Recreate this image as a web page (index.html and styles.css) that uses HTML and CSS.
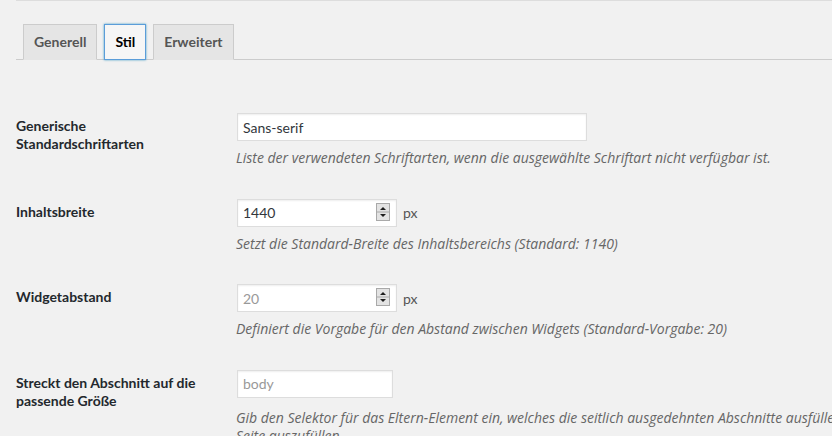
FILE: index.html
```html
<html><head><title>Elementor Einstellungen</title>
<link rel="stylesheet" href="styles.css">
</head>
<body>
  <div class="wrap">
    <nav class="nav-tab-wrapper">
      <a class="nav-tab">Generell</a>
      <a class="nav-tab nav-tab-active">Stil</a>
      <a class="nav-tab">Erweitert</a>
    </nav>

    <table class="form-table">
      <tr>
        <th>Generische Standardschriftarten</th>
        <td>
          <div class="field">
            <input class="regular-text" type="text" value="Sans-serif">
          </div>
          <p class="description">Liste der verwendeten Schriftarten, wenn die ausgewählte Schriftart nicht verfügbar ist.</p>
        </td>
      </tr>
      <tr>
        <th>Inhaltsbreite</th>
        <td>
          <div class="field">
            <span class="number-wrap">
              <input class="number-text" type="text" value="1440">
              <svg class="spinner" width="14" height="18" viewBox="0 0 14 18">
                <rect x="0.5" y="0.5" width="13" height="17" fill="#e3e3e3" stroke="#a9a9a9"/>
                <line x1="1" y1="9" x2="13" y2="9" stroke="#a9a9a9"/>
                <path d="M4 7 L7 4 L10 7 Z" fill="#1e1e1e"/>
                <path d="M4 11 L10 11 L7 14 Z" fill="#1e1e1e"/>
              </svg>
            </span>
            <span class="unit">px</span>
          </div>
          <p class="description">Setzt die Standard-Breite des Inhaltsbereichs (Standard: 1140)</p>
        </td>
      </tr>
      <tr>
        <th>Widgetabstand</th>
        <td>
          <div class="field">
            <span class="number-wrap">
              <input class="number-text" type="text" placeholder="20">
              <svg class="spinner" width="14" height="18" viewBox="0 0 14 18">
                <rect x="0.5" y="0.5" width="13" height="17" fill="#e3e3e3" stroke="#a9a9a9"/>
                <line x1="1" y1="9" x2="13" y2="9" stroke="#a9a9a9"/>
                <path d="M4 7 L7 4 L10 7 Z" fill="#1e1e1e"/>
                <path d="M4 11 L10 11 L7 14 Z" fill="#1e1e1e"/>
              </svg>
            </span>
            <span class="unit">px</span>
          </div>
          <p class="description">Definiert die Vorgabe für den Abstand zwischen Widgets (Standard-Vorgabe: 20)</p>
        </td>
      </tr>
      <tr>
        <th>Streckt den Abschnitt auf die passende Größe</th>
        <td>
          <div class="field">
            <input class="selector-text" type="text" placeholder="body">
          </div>
          <p class="description long">Gib den Selektor für das Eltern-Element ein, welches die seitlich ausgedehnten Abschnitte ausfüllen sollen (z.B. #primary / .wrapper / main etc). Leer lassen, um die<br>Seite auszufüllen.</p>
        </td>
      </tr>
    </table>
  </div>
</body>
</html>
```

FILE: styles.css
```css
body, html {
  margin: 0;
  padding: 0;
  background: #f1f1f1;
  color: #444;
  font-family: "Segoe UI", Lato, sans-serif;
  font-size: 14px;
  overflow: hidden;
}
.wrap {
  margin-left: 16px;
  width: 1200px;
  border-top: 1px solid #ddd;
}
.nav-tab-wrapper {
  display: flex;
  align-items: flex-end;
  gap: 7px;
  padding: 23px 0 0 7px;
  border-bottom: 1px solid #ccc;
}
.nav-tab {
  display: block;
  margin-bottom: -1px;
  padding: 5px 10px;
  line-height: 24px;
  font-size: 14px;
  font-weight: 700;
  color: #555;
  background: #e5e5e5;
  border: 1px solid #ccc;
  border-bottom-color: transparent;
}
.nav-tab-active {
  color: #000;
  background: #f6f6f6;
  border-color: #5b9dd9;
  box-shadow: 0 0 2px rgba(30, 140, 190, 0.8);
}
.form-table {
  margin-top: 37px;
  border-collapse: collapse;
  table-layout: fixed;
  width: 100%;
  font-size: 14px;
}
.form-table th {
  width: 200px;
  padding: 20px 10px 20px 0;
  text-align: left;
  vertical-align: top;
  font-weight: 700;
  line-height: 1.3;
  color: #23282d;
}
.form-table td {
  padding: 15px 10px;
  vertical-align: top;
}
.field {
  display: flex;
  align-items: center;
  height: 30px;
}
.field input {
  box-sizing: border-box;
  height: 28px;
  margin: 1px;
  padding: 3px 5px;
  border: 1px solid #ddd;
  box-shadow: inset 0 1px 2px rgba(0, 0, 0, 0.07);
  background: #fff;
  color: #32373c;
  font-family: inherit;
  font-size: 14px;
  outline: none;
}
.field input::placeholder {
  color: #999;
}
.regular-text {
  width: 350px;
}
.number-wrap {
  position: relative;
  display: block;
}
.number-text {
  width: 160px;
}
.selector-text {
  width: 156px;
}
.spinner {
  position: absolute;
  top: 5px;
  right: 8px;
}
.unit {
  margin-left: 5px;
  color: #555;
}
.description {
  margin: 6px 0 0;
  font-family: "Open Sans", sans-serif;
  font-size: 14px;
  font-style: italic;
  line-height: 19.5px;
  color: #666;
}
.long {
  margin-top: 10px;
  line-height: 18px;
  white-space: nowrap;
}
```
